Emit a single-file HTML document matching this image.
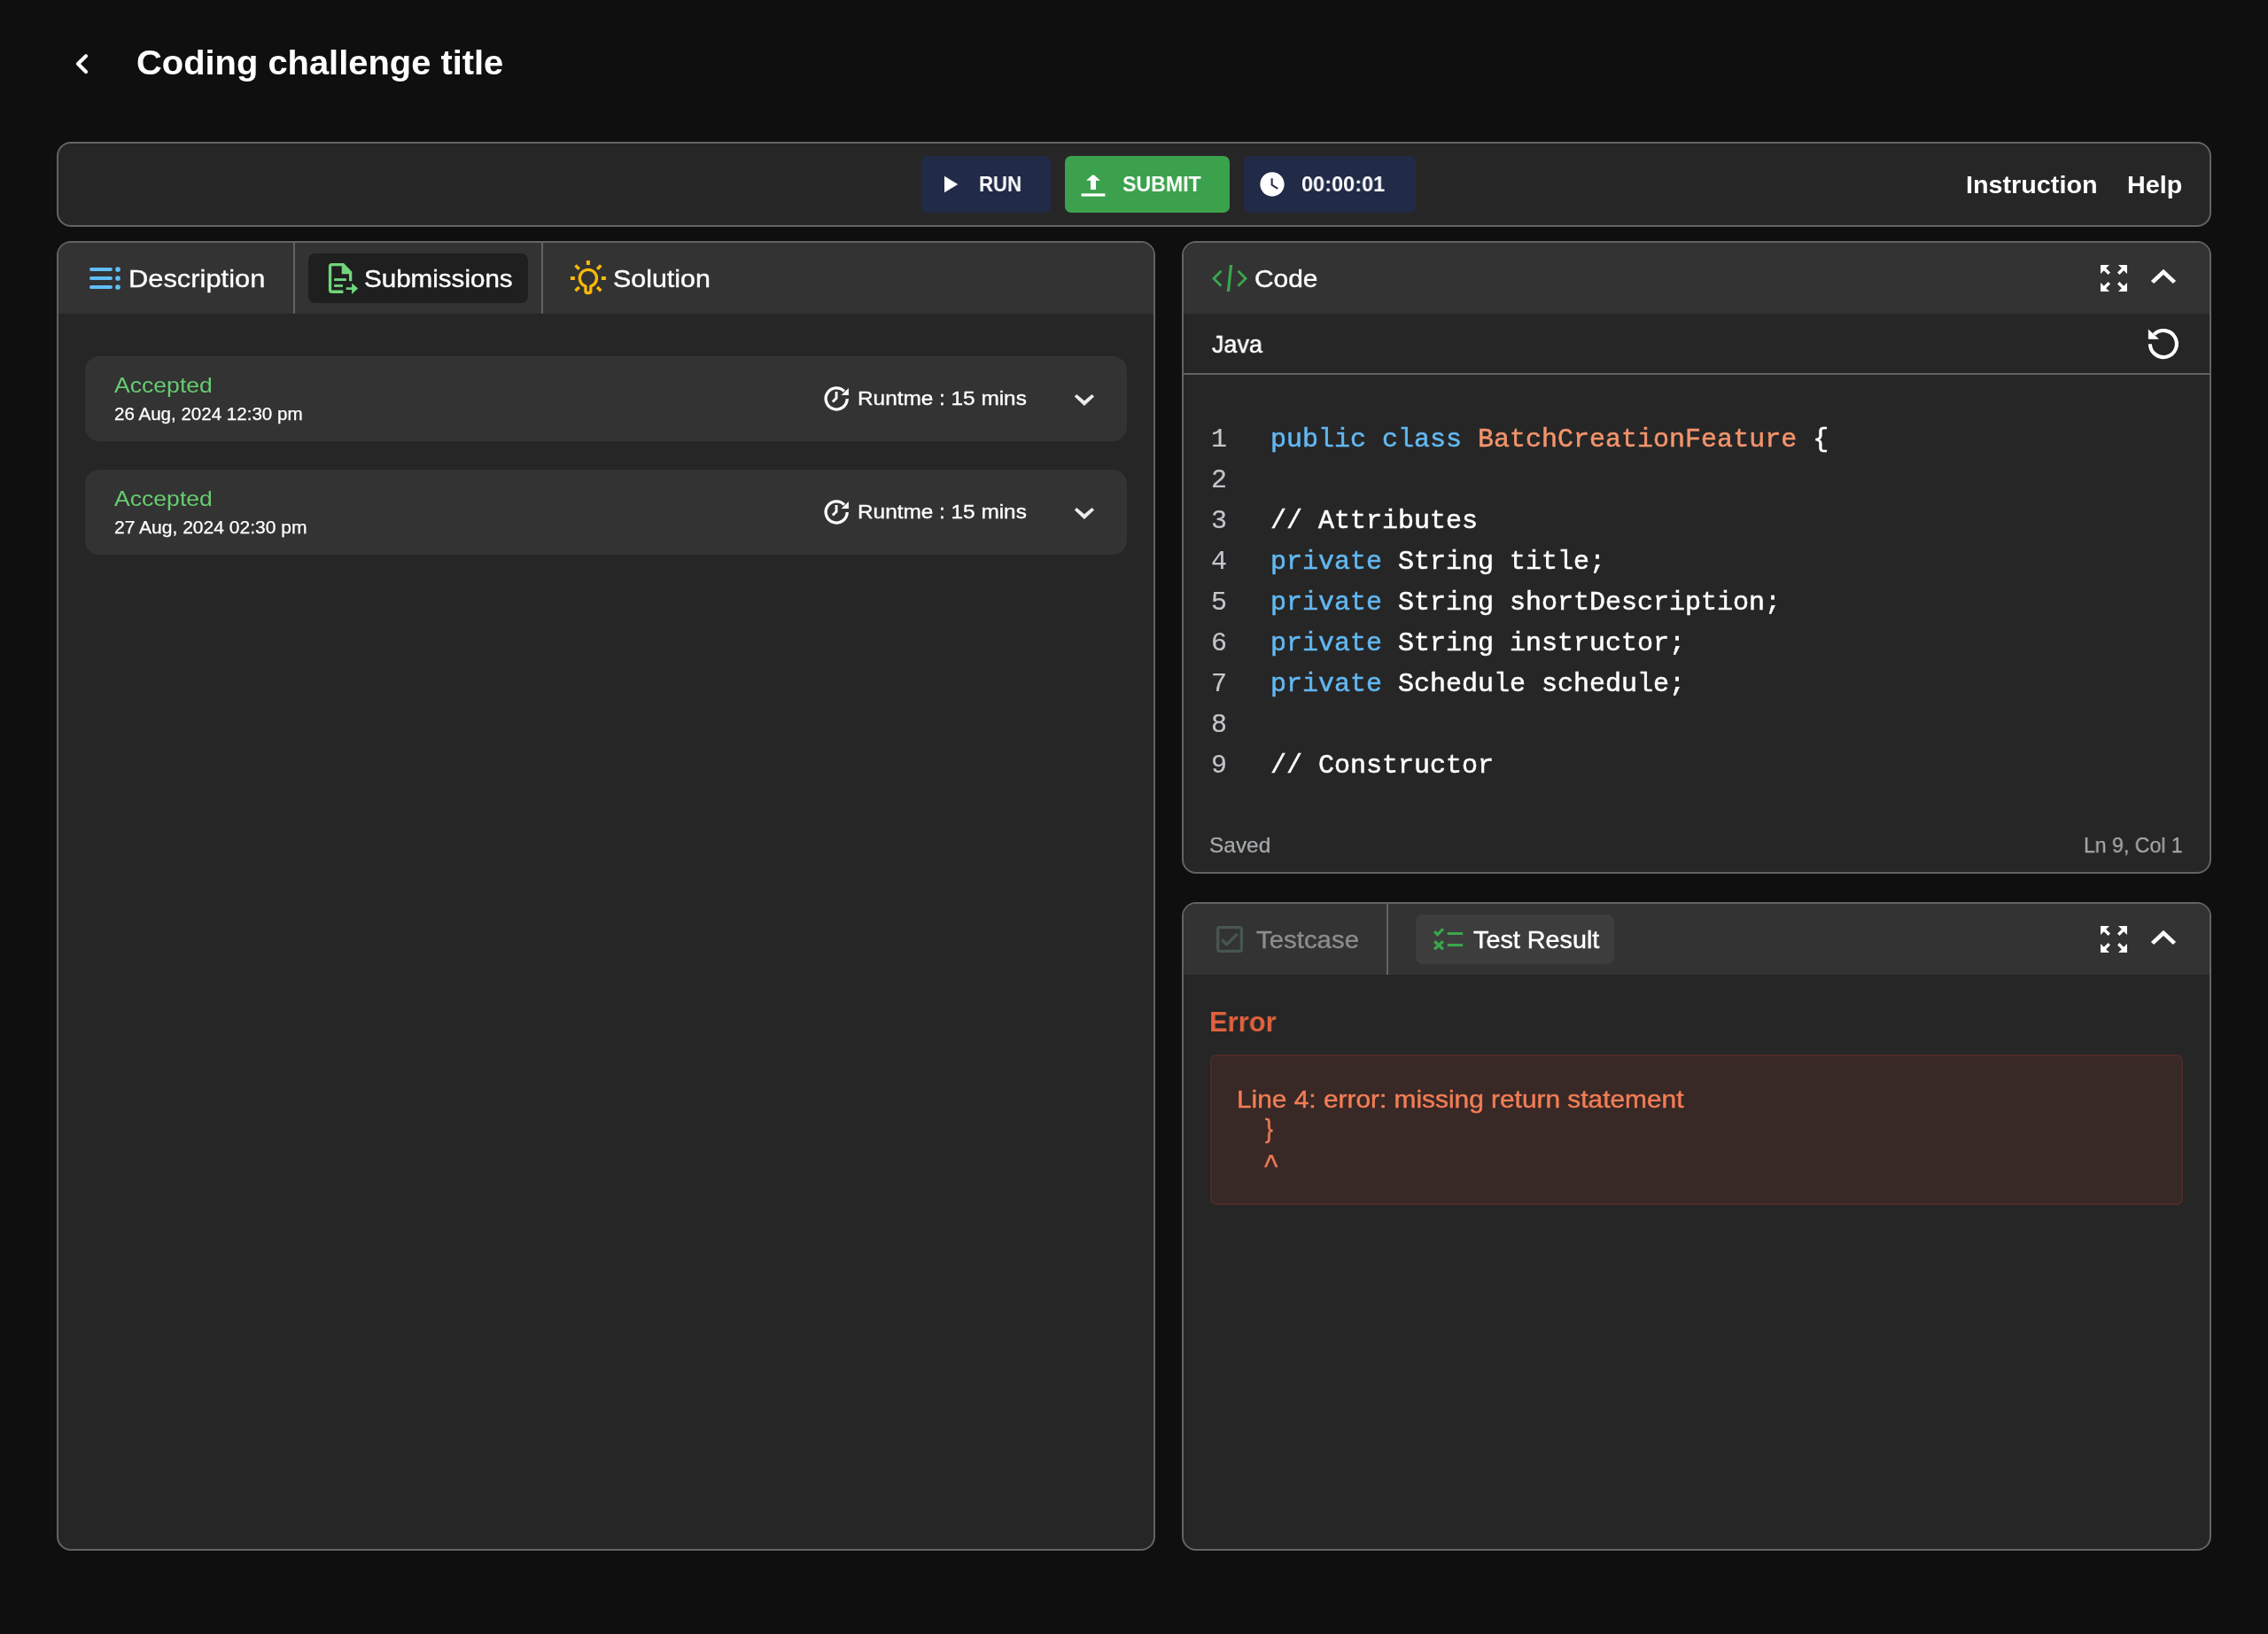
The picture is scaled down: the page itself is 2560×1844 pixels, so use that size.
<!DOCTYPE html>
<html lang="en">
<head>
<meta charset="utf-8">
<title>Coding challenge</title>
<style>
html,body{margin:0;padding:0;}
body{width:2560px;height:1844px;background:#0f0f0f;position:relative;overflow:hidden;font-family:"Liberation Sans",sans-serif;}
.b{position:absolute;box-sizing:border-box;}
.panel{border:2px solid #636363;border-radius:16px;background:#262626;overflow:hidden;}
.hdr{position:absolute;left:0;top:0;right:0;height:80px;background:#333333;}
.vd{position:absolute;top:0;width:2px;height:80px;background:#636363;}
.chip{position:absolute;border-radius:8px;}
.card{background:#333333;border-radius:16px;}
.btn{border-radius:7px;height:64px;top:176px;}
.t{position:absolute;white-space:nowrap;line-height:1;will-change:transform;transform-origin:0 0;}
.m{position:absolute;white-space:pre;line-height:1;will-change:transform;font-family:"Liberation Mono",monospace;font-size:30px;color:#ffffff;-webkit-text-stroke:0.5px;}
.m i{font-style:normal;}
.ln{left:1367px;color:#c3c7cc;-webkit-text-stroke:0.2px;}
.cl{left:1434px;}
.k{color:#62b8f2;}
.c{color:#f3946c;}
svg{position:absolute;left:0;top:0;}
</style>
</head>
<body>
<!-- toolbar -->
<div class="b panel" style="left:64px;top:160px;width:2432px;height:96px;"></div>
<div class="b btn" style="left:1040px;width:146px;background:#212a47;"></div>
<div class="b btn" style="left:1202px;width:186px;background:#3ba14c;"></div>
<div class="b btn" style="left:1404px;width:194px;background:#212a47;"></div>

<!-- left panel -->
<div class="b panel" style="left:64px;top:272px;width:1240px;height:1478px;">
  <div class="hdr"></div>
  <div class="vd" style="left:265px;"></div>
  <div class="vd" style="left:545px;"></div>
  <div class="chip" style="left:282px;top:12px;width:248px;height:56px;background:#1f1f1f;"></div>
</div>
<div class="b card" style="left:96px;top:402px;width:1176px;height:96px;"></div>
<div class="b card" style="left:96px;top:530px;width:1176px;height:96px;"></div>

<!-- code panel -->
<div class="b panel" style="left:1334px;top:272px;width:1162px;height:714px;">
  <div class="hdr"></div>
  <div style="position:absolute;left:0;right:0;top:147px;height:2px;background:#636363;"></div>
</div>

<!-- test panel -->
<div class="b panel" style="left:1334px;top:1018px;width:1162px;height:732px;">
  <div class="hdr"></div>
  <div class="vd" style="left:229px;"></div>
  <div class="chip" style="left:262px;top:12px;width:224px;height:56px;background:#3d3d3d;"></div>
</div>
<div class="b" style="left:1366px;top:1190px;width:1098px;height:170px;border:2px solid #4b2b27;border-radius:7px;background:#382826;"></div>

<svg width="2560" height="1844" viewBox="0 0 2560 1844">
<!-- back chevron -->
<path d="M97 63.2 L88 72 L97 81" fill="none" stroke="#ffffff" stroke-width="4.2" stroke-linecap="round" stroke-linejoin="round"/>
<!-- play -->
<path d="M1066 198.8 L1081.3 208 L1066 217.2 Z" fill="#ffffff"/>
<!-- upload -->
<path d="M1233 197.5 L1235 197.5 L1241.9 203.7 L1237 203.7 L1237 213.9 L1231 213.9 L1231 203.7 L1226.1 203.7 Z" fill="#ffffff"/>
<rect x="1220.6" y="218.4" width="26.8" height="3.2" fill="#ffffff"/>
<!-- clock (watch_later) -->
<g transform="translate(1436 208) scale(1.365) translate(-12 -12)"><path d="M12 2C6.5 2 2 6.5 2 12s4.5 10 10 10 10-4.5 10-10S17.5 2 12 2zm4.2 14.2L11 13V7h1.5v5.2l4.5 2.7-.8 1.3z" fill="#ffffff"/></g>
<!-- description icon -->
<g fill="#60bff8">
<rect x="101" y="302" width="26" height="4" rx="2"/><rect x="101" y="312" width="26" height="4" rx="2"/><rect x="101" y="322" width="26" height="4" rx="2"/>
<circle cx="133" cy="304" r="2.85"/><circle cx="133" cy="314" r="2.85"/><circle cx="133" cy="324" r="2.85"/>
</g>
<!-- submissions icon -->
<g fill="#70d67b">
<path d="M374.6 297 L388 297 L397.3 306.8 L397.3 317.2 L394 317.2 L394 309.3 L385.75 309.3 L385.75 300.3 L374.2 300.3 L374.2 327.6 L387.4 327.6 L387.4 330.9 L374.6 330.9 A3.7 3.7 0 0 1 370.9 327.2 L370.9 300.7 A3.7 3.7 0 0 1 374.6 297 Z"/>
<rect x="377.1" y="314.1" width="13.8" height="2.9"/>
<rect x="377.1" y="321.1" width="9.9" height="2.8"/>
<path d="M390.7 324.2 L397.1 324.2 L397.1 319.4 L404.1 325.6 L397.1 331.9 L397.1 327 L390.7 327 Z"/>
</g>
<!-- solution bulb -->
<g stroke="#fbb908" fill="none">
<path d="M660.95 323 A9.55 9.55 0 1 1 666.85 323 L666.85 328.5 A2 2 0 0 1 664.85 330.5 L662.95 330.5 A2 2 0 0 1 660.95 328.5 Z" stroke-width="3.3" stroke-linejoin="round"/>
<g stroke-width="4">
<path d="M663.9 294 L663.9 299"/><path d="M643.9 314 L648.9 314"/><path d="M678.9 314 L683.9 314"/>
<g stroke-width="3.6"><path d="M649.5 299.5 L653.7 303.7"/><path d="M678.3 299.5 L674.1 303.7"/>
<path d="M649.5 328.3 L653.7 324.1"/><path d="M678.3 328.3 L674.1 324.1"/></g>
</g>
</g>
<!-- code icon -->
<g stroke="#3aa64c" stroke-width="2.9" fill="none">
<path d="M1378.5 305.75 L1370 314.3 L1378.5 322.85"/>
<path d="M1397.5 305.75 L1406 314.3 L1397.5 322.85"/>
</g>
<path d="M1387.9 299.1 L1391.2 299.1 L1388.1 329 L1384.8 329 Z" fill="#3aa64c"/>
<!-- fullscreen icons (zoom_out_map) -->
<g fill="#ffffff">
<g transform="translate(2366 294) scale(1.6667)"><path d="M15 3l2.3 2.3-2.89 2.87 1.42 1.42L18.7 6.7 21 9V3zM3 9l2.3-2.3 2.87 2.89 1.42-1.42L6.7 5.3 9 3H3zm6 12l-2.3-2.3 2.89-2.87-1.42-1.42L5.3 17.3 3 15v6zm12-6l-2.3 2.3-2.87-2.89-1.42 1.42 2.89 2.87L15 21h6z"/></g>
<g transform="translate(2366 1040) scale(1.6667)"><path d="M15 3l2.3 2.3-2.89 2.87 1.42 1.42L18.7 6.7 21 9V3zM3 9l2.3-2.3 2.87 2.89 1.42-1.42L6.7 5.3 9 3H3zm6 12l-2.3-2.3 2.89-2.87-1.42-1.42L5.3 17.3 3 15v6zm12-6l-2.3 2.3-2.87-2.89-1.42 1.42 2.89 2.87L15 21h6z"/></g>
<!-- chevron up x2 -->
<path id="chu" d="M2442 303.8 L2456.1 317 L2452.8 320.1 L2442 310 L2431.2 320.1 L2427.9 317 Z"/>
<path d="M2442 1049.8 L2456.1 1063 L2452.8 1066.1 L2442 1056 L2431.2 1066.1 L2427.9 1063 Z"/>
</g>
<!-- reset icon -->
<path d="M2426.9 388.2 A15 15 0 1 0 2431.3 377.4" fill="none" stroke="#ffffff" stroke-width="4.1"/>
<path d="M2424.9 371.4 L2424.9 382.8 L2437 382.8 Z" fill="#ffffff"/>
<!-- runtime icons -->
<g id="rt">
<path d="M956.25 450.1 A12.05 12.05 0 1 1 952.9 441.6" fill="none" stroke="#ffffff" stroke-width="3.3"/>
<path d="M957.9 438 L957.9 446 L949.6 446 Z" fill="#ffffff"/>
<path d="M944.05 442 L944.05 449.3 L939.8 453.6" fill="none" stroke="#ffffff" stroke-width="2.9"/>
<path d="M1212.8 447.55 L1215.3 445 L1223.9 452.2 L1232.5 445 L1235.05 447.55 L1223.9 458.05 Z" fill="#ececec"/>
</g>
<g transform="translate(0 128)">
<path d="M956.25 450.1 A12.05 12.05 0 1 1 952.9 441.6" fill="none" stroke="#ffffff" stroke-width="3.3"/>
<path d="M957.9 438 L957.9 446 L949.6 446 Z" fill="#ffffff"/>
<path d="M944.05 442 L944.05 449.3 L939.8 453.6" fill="none" stroke="#ffffff" stroke-width="2.9"/>
<path d="M1212.8 447.55 L1215.3 445 L1223.9 452.2 L1232.5 445 L1235.05 447.55 L1223.9 458.05 Z" fill="#ececec"/>
</g>
<!-- testcase icon (check_box outlined) -->
<g transform="translate(1368 1040) scale(1.6667)"><path d="M19 3H5c-1.11 0-2 .9-2 2v14c0 1.1.89 2 2 2h14c1.11 0 2-.9 2-2V5c0-1.1-.89-2-2-2zm0 16H5V5h14v14zM17.99 9l-1.41-1.42-6.59 6.59-2.58-2.57-1.42 1.41 4 3.99z" fill="#47564e"/></g>
<!-- test result icon -->
<g stroke="#3aa64c" stroke-width="3.3" fill="none">
<path d="M1619.2 1051.2 L1622.7 1054.6 L1629 1048.2"/>
<path d="M1619.2 1062.2 L1628.9 1071.3"/><path d="M1628.9 1062.2 L1619.2 1071.3"/>
</g>
<rect x="1633.8" y="1052" width="17.3" height="3" fill="#3aa64c"/>
<rect x="1633.8" y="1065" width="17.3" height="3.1" fill="#3aa64c"/>
</svg>


<span class="t" id="title" style="left:154.00px;top:51.00px;font-size:39.4px;color:#ffffff;font-weight:700;transform:scaleX(1.0123);">Coding challenge title</span>
<span class="t" id="run" style="left:1105.20px;top:196.00px;font-size:24px;color:#ffffff;font-weight:700;transform:scaleX(0.9235);">RUN</span>
<span class="t" id="submit" style="left:1267.10px;top:196.00px;font-size:24px;color:#ffffff;font-weight:700;transform:scaleX(0.9641);">SUBMIT</span>
<span class="t" id="timer" style="left:1469.00px;top:196.00px;font-size:24px;color:#ffffff;font-weight:700;transform:scaleX(0.9798);">00:00:01</span>
<span class="t" id="instr" style="left:2218.70px;top:195.00px;font-size:27.6px;color:#ffffff;font-weight:700;transform:scaleX(1.0418);">Instruction</span>
<span class="t" id="help" style="left:2400.70px;top:195.00px;font-size:27.6px;color:#ffffff;font-weight:700;transform:scaleX(1.0393);">Help</span>
<span class="t" id="desc" style="left:145.40px;top:301.00px;font-size:27.46px;color:#ffffff;-webkit-text-stroke:0.3px;transform:scaleX(1.1237);">Description</span>
<span class="t" id="subm" style="left:411.30px;top:301.00px;font-size:27.28px;color:#ffffff;-webkit-text-stroke:0.4px;transform:scaleX(1.0846);">Submissions</span>
<span class="t" id="sol" style="left:692.00px;top:301.00px;font-size:27.28px;color:#ffffff;-webkit-text-stroke:0.4px;transform:scaleX(1.1154);">Solution</span>
<span class="t" id="acc1" style="left:129.20px;top:423.00px;font-size:24px;color:#66cc70;transform:scaleX(1.1079);">Accepted</span>
<span class="t" id="date1" style="left:129.20px;top:457.00px;font-size:20.17px;color:#ffffff;-webkit-text-stroke:0.25px;transform:scaleX(1.0195);">26 Aug, 2024 12:30 pm</span>
<span class="t" id="rt1" style="left:968.20px;top:439.00px;font-size:22.48px;color:#ffffff;-webkit-text-stroke:0.35px;transform:scaleX(1.0837);">Runtme : 15 mins</span>
<span class="t" id="acc2" style="left:129.20px;top:551.00px;font-size:24px;color:#66cc70;transform:scaleX(1.1079);">Accepted</span>
<span class="t" id="date2" style="left:129.20px;top:585.00px;font-size:20.17px;color:#ffffff;-webkit-text-stroke:0.25px;transform:scaleX(1.0429);">27 Aug, 2024 02:30 pm</span>
<span class="t" id="rt2" style="left:968.20px;top:567.00px;font-size:22.48px;color:#ffffff;-webkit-text-stroke:0.35px;transform:scaleX(1.0837);">Runtme : 15 mins</span>
<span class="t" id="code" style="left:1416.00px;top:301.00px;font-size:27.28px;color:#ffffff;-webkit-text-stroke:0.4px;transform:scaleX(1.0971);">Code</span>
<span class="t" id="java" style="left:1368.40px;top:375.00px;font-size:28.07px;color:#ffffff;-webkit-text-stroke:0.5px;transform:scaleX(0.9579);">Java</span>
<span class="t" id="saved" style="left:1365.30px;top:942.00px;font-size:24.01px;color:#a6a9ab;-webkit-text-stroke:0.25px;transform:scaleX(1.0186);">Saved</span>
<span class="t" id="lncol" style="left:2352.00px;top:942.00px;font-size:24.01px;color:#a6a9ab;-webkit-text-stroke:0.25px;transform:scaleX(0.9619);">Ln 9, Col 1</span>
<span class="t" id="tcase" style="left:1417.50px;top:1047.00px;font-size:27.28px;color:#8c8c8c;-webkit-text-stroke:0.4px;transform:scaleX(1.0779);">Testcase</span>
<span class="t" id="tres" style="left:1663.20px;top:1047.00px;font-size:27.19px;color:#ffffff;-webkit-text-stroke:0.45px;transform:scaleX(1.0579);">Test Result</span>
<span class="t" id="error" style="left:1364.80px;top:1137.00px;font-size:32px;color:#e0613f;font-weight:700;transform:scaleX(0.9667);">Error</span>
<span class="t" id="err1" style="left:1396.30px;top:1227.00px;font-size:27.19px;color:#f27d55;-webkit-text-stroke:0.45px;transform:scaleX(1.0982);">Line 4: error: missing return statement</span>
<span class="t" id="err2" style="left:1427.70px;top:1259.00px;font-size:29.62px;color:#f27d55;-webkit-text-stroke:0.45px;transform:scaleX(0.8800);">}</span>
<span class="t" id="err3" style="left:1426.90px;top:1298.00px;font-size:37.27px;color:#f27d55;-webkit-text-stroke:0.3px;transform:scaleX(0.8800);">^</span>

<span class="m ln" style="top:481.4px">1</span>
<span class="m cl" style="top:481.4px"><i class="k">public</i> <i class="k">class</i> <i class="c">BatchCreationFeature</i> {</span>
<span class="m ln" style="top:527.4px">2</span>
<span class="m ln" style="top:573.4px">3</span>
<span class="m cl" style="top:573.4px">// Attributes</span>
<span class="m ln" style="top:619.4px">4</span>
<span class="m cl" style="top:619.4px"><i class="k">private</i> String title;</span>
<span class="m ln" style="top:665.4px">5</span>
<span class="m cl" style="top:665.4px"><i class="k">private</i> String shortDescription;</span>
<span class="m ln" style="top:711.4px">6</span>
<span class="m cl" style="top:711.4px"><i class="k">private</i> String instructor;</span>
<span class="m ln" style="top:757.4px">7</span>
<span class="m cl" style="top:757.4px"><i class="k">private</i> Schedule schedule;</span>
<span class="m ln" style="top:803.4px">8</span>
<span class="m ln" style="top:849.4px">9</span>
<span class="m cl" style="top:849.4px">// Constructor</span>
</body>
</html>
